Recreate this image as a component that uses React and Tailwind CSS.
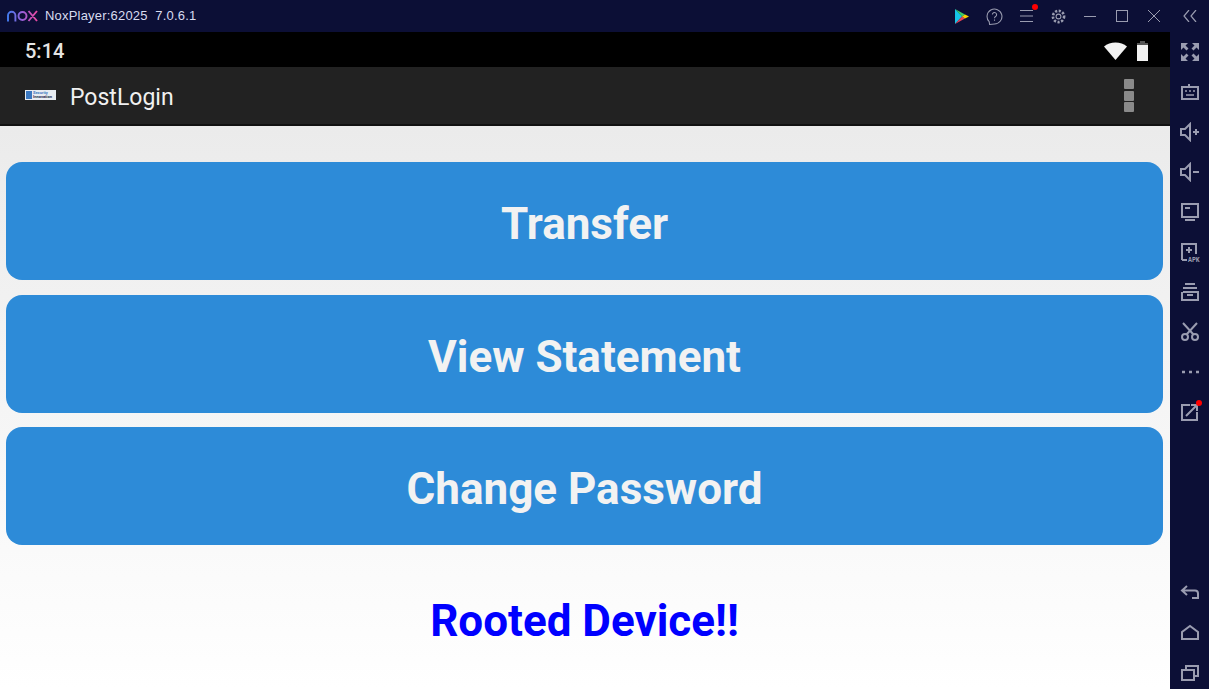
import React from "react";

const stroke = "#9a9cb0";

const Ico = ({ children }) => (
  <svg width="20" height="20" viewBox="0 0 20 20" fill="none" stroke={stroke} strokeWidth="2">
    {children}
  </svg>
);

const topSlot = "w-[32px] h-[32px] flex items-center justify-center relative";

const TopBar = () => (
  <div className="h-[32px] bg-[#0c0f36] flex items-center shrink-0">
    <svg width="31" height="12" viewBox="0 0 31 12" fill="none" strokeWidth="1.9" className="ml-[7px]">
      <defs>
        <linearGradient id="noxg" gradientUnits="userSpaceOnUse" x1="0" x2="31" y1="0" y2="0">
          <stop offset="0" stopColor="#3f7cf0" />
          <stop offset="0.5" stopColor="#9a5fd8" />
          <stop offset="1" stopColor="#f0479e" />
        </linearGradient>
      </defs>
      <path d="M1 11.5V5.5a3.7 3.7 0 0 1 7.4 0v6M11.5 6a4 4 0 1 0 8 0a4 4 0 1 0-8 0M21.5 1L30 11M30 1L21.5 11" stroke="url(#noxg)" />
    </svg>
    <span className="ml-[7px] text-[13px] text-[#d8dcf0] font-['Liberation_Sans',sans-serif] tracking-[0.2px] whitespace-pre">
      NoxPlayer:62025  7.0.6.1
    </span>
    <div className="ml-auto flex items-center pr-[3px]">
      <div className={topSlot}>
        <svg width="14" height="15" viewBox="0 0 14 15">
          <path d="M0 0L7 7.5L0 15Z" fill="#15c4e8" />
          <path d="M0 0L10 5.5L7 7.5Z" fill="#3ecf6a" />
          <path d="M0 15L10 9.5L7 7.5Z" fill="#e8425a" />
          <path d="M10 5.5L14 7.5L10 9.5L7 7.5Z" fill="#fbd000" />
        </svg>
      </div>
      <div className={topSlot}>
        <svg width="17" height="17" viewBox="0 0 16 16" fill="none" stroke={stroke} strokeWidth="1">
          <path d="M8 15A7 7 0 1 0 3 12.9L3.4 15.5Z" />
          <path d="M6 6.2a2 2 0 1 1 3 1.8c-.7.4-1 .8-1 1.6M8 10.8v1.2" />
        </svg>
      </div>
      <div className={topSlot}>
        <svg width="13" height="12" viewBox="0 0 13 12" stroke={stroke} strokeWidth="1">
          <path d="M0 .5H13M0 6H13M0 11.5H13" />
        </svg>
        <span className="absolute top-[4px] right-[4px] w-[6px] h-[6px] rounded-full bg-[#ff0000]" />
      </div>
      <div className={topSlot}>
        <svg width="15" height="15" viewBox="0 0 15 15" fill="none" stroke={stroke} strokeWidth="1.1">
          <circle cx="7.5" cy="7.5" r="2.4" />
          <circle cx="7.5" cy="7.5" r="5.6" strokeWidth="2.6" strokeDasharray="2.2 1.5" />
        </svg>
      </div>
      <div className={topSlot}>
        <div className="w-[12px] h-[1px] bg-[#9a9cb0]" />
      </div>
      <div className={topSlot}>
        <div className="w-[12px] h-[12px] border border-[#9a9cb0]" />
      </div>
      <div className={topSlot}>
        <svg width="12" height="12" viewBox="0 0 12 12" stroke={stroke} strokeWidth="1">
          <path d="M0 0L12 12M12 0L0 12" />
        </svg>
      </div>
      <div className={`${topSlot} ml-[4px]`}>
        <svg width="14" height="12" viewBox="0 0 14 12" fill="none" stroke={stroke} strokeWidth="1.2">
          <path d="M6 0L1 6L6 12M13 0L8 6L13 12" />
        </svg>
      </div>
    </div>
  </div>
);

const SideBar = () => (
  <div className="w-[39px] bg-[#0c0f36] flex flex-col items-center shrink-0 pt-[10px]">
    <div className="flex flex-col gap-[20px]">
      <Ico>
        <path d="M1 1H8L5.5 3.5L8.5 6.5L6.5 8.5L3.5 5.5L1 8ZM19 1H12L14.5 3.5L11.5 6.5L13.5 8.5L16.5 5.5L19 8ZM1 19H8L5.5 16.5L8.5 13.5L6.5 11.5L3.5 14.5L1 12ZM19 19H12L14.5 16.5L11.5 13.5L13.5 11.5L16.5 14.5L19 12Z" fill={stroke} stroke="none" />
      </Ico>
      <Ico>
        <path d="M2 5H18V17H2ZM9 5V2" />
        <path d="M5 9H7M9 9H11M13 9H15M6 13H14" strokeWidth="1.6" />
      </Ico>
      <Ico>
        <path d="M1 7H5L10 2V18L5 13H1ZM13 10H19M16 7V13" />
      </Ico>
      <Ico>
        <path d="M1 7H5L10 2V18L5 13H1ZM13 10H19" />
      </Ico>
      <Ico>
        <path d="M2 2H18V15H2ZM5 18H15M5 6H10" />
      </Ico>
      <svg width="20" height="20" viewBox="0 0 20 20" fill="none" stroke={stroke} strokeWidth="2" className="overflow-visible">
        <path d="M2 18V2H16V12M6 8H12M9 5V11M2 18H7" />
        <text x="8" y="20" fontSize="6.5" fontWeight="700" fill={stroke} stroke="none" fontFamily="Liberation Mono, monospace">APK</text>
      </svg>
      <Ico>
        <path d="M5 2H15M3 6H17M3 10H18V18H2V10M7 13H13" />
      </Ico>
      <Ico>
        <circle cx="5" cy="15" r="3" />
        <circle cx="15" cy="15" r="3" />
        <path d="M6.5 12.5L17 1M13.5 12.5L3 1" />
      </Ico>
      <Ico>
        <path d="M2 10H5M9 10H12M16 10H19" strokeWidth="2.4" />
      </Ico>
      <div className="relative">
        <Ico>
          <path d="M10 3H2V18H17V10M6 14L16 4M11 3H17V9" />
        </Ico>
        <span className="absolute top-[-2px] right-[-2px] w-[6px] h-[6px] rounded-full bg-[#ff0000]" />
      </div>
    </div>
    <div className="mt-auto flex flex-col gap-[20px] pb-[7px]">
      <Ico>
        <path d="M7 4L2 8.5L7 13M2 8.5H15A3 3 0 0 1 18 11.5V16H12" />
      </Ico>
      <Ico>
        <path d="M2 17V10L10 4L18 10V17Z" />
      </Ico>
      <Ico>
        <path d="M2 8H14V18H2ZM6 8V4H18V14H14" />
      </Ico>
    </div>
  </div>
);

const ActionButton = ({ label }) => (
  <button className="h-[118px] pt-[6px] rounded-[16px] bg-[#2d8bd8] text-[#f2f2f2] text-[44px] font-bold flex items-center justify-center">
    {label}
  </button>
);

export default function App() {
  return (
    <div className="w-[1209px] h-[689px] flex flex-col overflow-hidden font-['Roboto',sans-serif]">
      <TopBar />
      <div className="flex flex-1 min-h-0">
        <div className="flex-1 flex flex-col min-w-0">
          <div className="h-[35px] bg-black flex items-center pl-[25px] pr-[22px] shrink-0">
            <span className="text-[20px] font-medium text-[#e4e4e4] pt-[3px]">5:14</span>
            <div className="ml-auto flex items-center gap-[10px] pt-[2px]">
              <svg width="23" height="18" viewBox="0 0 23 18">
                <path d="M0 4.5C6 -1 17 -1 23 4.5L11.5 18Z" fill="#f2f2f2" />
              </svg>
              <svg width="11" height="20" viewBox="0 0 11 20">
                <path d="M3 0H8V2H11V20H0V2H3Z" fill="#f2f2f2" />
                <path d="M3 0H8V2H11V4H0V2H3Z" fill="#555" />
              </svg>
            </div>
          </div>
          <div className="h-[59px] bg-[#222222] border-b-2 border-b-[#111111] flex items-center pl-[25px] shrink-0">
            <div className="w-[31px] h-[10px] mt-[-1px] bg-[#e8ecf2] flex items-center gap-[1px] px-[1px] overflow-hidden">
              <div className="w-[6px] h-[8px] bg-[#3b78c0] shrink-0" />
              <div className="flex-1 text-[4px] leading-[4px] text-[#1a2a4a] whitespace-nowrap font-bold">
                <div className="text-[#3b78c0]">Security</div>
                <div>Innovation</div>
              </div>
            </div>
            <span className="ml-[14px] text-[23px] text-[#f0f0f0] pt-[6px]">PostLogin</span>
            <div className="ml-auto mr-[36px] flex flex-col gap-[1.5px]">
              <div className="w-[10px] h-[10px] rounded-[1px] bg-[#8a8a8a]" />
              <div className="w-[10px] h-[10px] rounded-[1px] bg-[#8a8a8a]" />
              <div className="w-[10px] h-[10px] rounded-[1px] bg-[#8a8a8a]" />
            </div>
          </div>
          <div className="flex-1 bg-gradient-to-b from-[#ebebeb] to-[#ffffff] pl-[6px] pt-[36px] pr-[7px] flex flex-col">
            <div className="flex flex-col gap-[14.5px]">
              <ActionButton label="Transfer" />
              <ActionButton label="View Statement" />
              <ActionButton label="Change Password" />
            </div>
            <div className="text-center text-[#0000ff] text-[44px] font-bold mt-[43px]">Rooted Device!!</div>
          </div>
        </div>
        <SideBar />
      </div>
    </div>
  );
}
